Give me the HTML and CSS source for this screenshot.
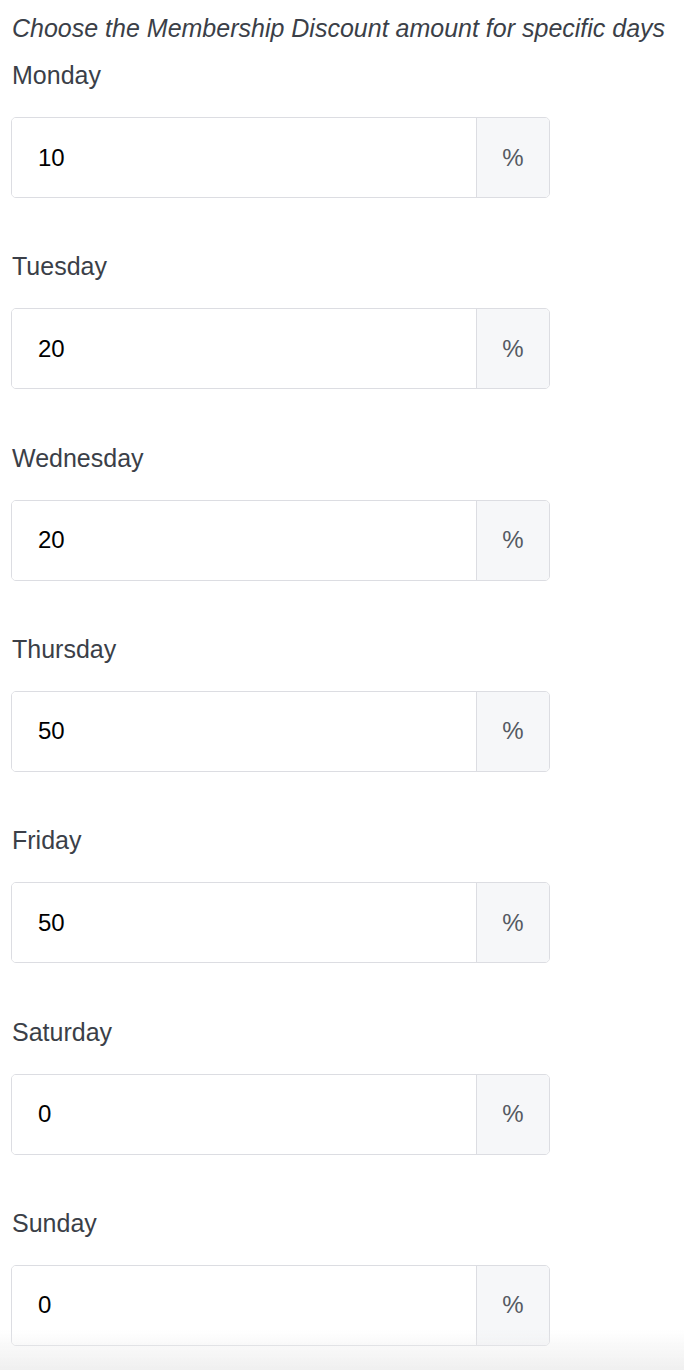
FILE: index.html
```html
<!DOCTYPE html>
<html lang="en">
<head>
  <meta charset="UTF-8">
  <meta name="viewport" content="width=device-width, initial-scale=1.0">
  <title>Membership Discount</title>
  <link rel="stylesheet" href="styles.css">
</head>
<body>
  <p class="intro">Choose the Membership Discount amount for specific days</p>

  <div class="field">
    <label for="monday">Monday</label>
    <div class="input-group">
      <input type="text" id="monday" value="10">
      <span class="addon">%</span>
    </div>
  </div>

  <div class="field">
    <label for="tuesday">Tuesday</label>
    <div class="input-group">
      <input type="text" id="tuesday" value="20">
      <span class="addon">%</span>
    </div>
  </div>

  <div class="field">
    <label for="wednesday">Wednesday</label>
    <div class="input-group">
      <input type="text" id="wednesday" value="20">
      <span class="addon">%</span>
    </div>
  </div>

  <div class="field">
    <label for="thursday">Thursday</label>
    <div class="input-group">
      <input type="text" id="thursday" value="50">
      <span class="addon">%</span>
    </div>
  </div>

  <div class="field">
    <label for="friday">Friday</label>
    <div class="input-group">
      <input type="text" id="friday" value="50">
      <span class="addon">%</span>
    </div>
  </div>

  <div class="field">
    <label for="saturday">Saturday</label>
    <div class="input-group">
      <input type="text" id="saturday" value="0">
      <span class="addon">%</span>
    </div>
  </div>

  <div class="field">
    <label for="sunday">Sunday</label>
    <div class="input-group">
      <input type="text" id="sunday" value="0">
      <span class="addon">%</span>
    </div>
  </div>

  <div class="fade"></div>
</body>
</html>
```

FILE: styles.css
```css
body { margin: 0; padding: 12px 0 0 11px; font-family: "Liberation Sans", Arial, sans-serif; color: #3b3f48; background: #fff; }
.intro { margin: 0 0 13px 1px; font-size: 25px; line-height: 32px; font-style: italic; white-space: nowrap; }
.field { margin-bottom: 50.33px; }
.field label { display: block; margin: 0 0 24px 1px; font-size: 25px; line-height: 36px; }
.input-group { display: flex; width: 539px; height: 81px; box-sizing: border-box; border: 1px solid #dcdde2; border-radius: 5px; overflow: hidden; }
.input-group input { flex: 1; min-width: 0; border: 0; margin: 0; padding: 0 0 0 26px; font-family: "Liberation Sans", Arial, sans-serif; font-size: 24px; color: #000; background: #fff; outline: none; }
.addon { display: flex; align-items: center; justify-content: center; width: 72px; border-left: 1px solid #dcdde2; background: #f6f7f9; color: #555a62; font-size: 24px; }
.fade { position: fixed; left: 0; right: 0; bottom: 0; height: 40px; background: linear-gradient(to bottom, rgba(238,238,238,0), rgba(238,238,238,0.9)); pointer-events: none; }
```
